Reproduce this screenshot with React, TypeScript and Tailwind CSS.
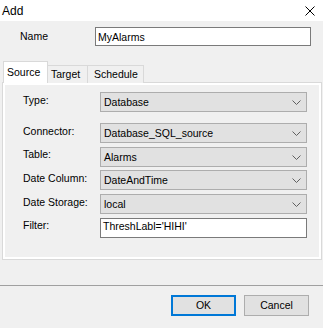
import React from 'react';

const font = { fontFamily: '"Liberation Sans", Arial, sans-serif' };

const Chevron: React.FC = () => (
  <svg width="9" height="5" viewBox="0 0 9 5" className="shrink-0">
    <path d="M0.5 0.5 L4.5 4.5 L8.5 0.5" fill="none" stroke="#606060" strokeWidth="1" />
  </svg>
);

interface RowProps {
  label: string;
  value: string;
  labelOffset: string;
  rowClass: string;
  kind?: 'combo' | 'text';
}

const Row: React.FC<RowProps> = ({ label, value, labelOffset, rowClass, kind = 'combo' }) => (
  <div className={`flex items-start h-[20px] ${rowClass}`}>
    <div className={`w-[77px] ml-[18px] leading-[13px] text-[#000] ${labelOffset}`}>{label}</div>
    {kind === 'combo' ? (
      <div className="w-[207px] h-[20px] bg-[#e1e1e1] border border-[#adadad] flex items-center justify-between pl-[3px] pr-[5px] pt-[1px]">
        <span className="leading-[13px]">{value}</span>
        <Chevron />
      </div>
    ) : (
      <div className="w-[207px] h-[20px] bg-white border border-[#7a7a7a] flex items-start pl-[2px] pt-[1px]">
        <span className="leading-[13px]">{value}</span>
      </div>
    )}
  </div>
);

export default function App() {
  return (
    <div className="w-[323px] h-[328px] bg-[#f0f0f0] flex flex-col text-[10.5px] text-black overflow-hidden" style={font}>
      {/* title bar */}
      <div className="h-[21px] bg-white flex items-center justify-between pl-[2px] pr-[8px] shrink-0">
        <span className="text-[12px] leading-[14px]">Add</span>
        <svg width="10" height="10" viewBox="0 0 10 10">
          <path d="M0.5 0.5 L9.5 9.5 M9.5 0.5 L0.5 9.5" stroke="#000" strokeWidth="1" />
        </svg>
      </div>

      {/* name */}
      <div className="mt-[6px] flex items-start h-[19px] shrink-0">
        <div className="w-[95px] pl-[20px] pt-[3px] leading-[13px]">Name</div>
        <div className="w-[216px] h-[19px] bg-white border border-[#7a7a7a] pl-[2px] pt-[3px] leading-[13px]">MyAlarms</div>
      </div>

      {/* tabs */}
      <div className="mt-[15px] ml-[3px] flex items-end h-[22px] -mb-[1px] relative z-10 shrink-0">
        <div className="h-[22px] w-[45px] bg-white border border-b-0 border-[#d9d9d9] pl-[3px] pt-[4px] leading-[13px]">Source</div>
        <div className="h-[18px] w-[40px] bg-[#f0f0f0] border border-l-0 border-b-0 border-[#d9d9d9] pl-[3px] pt-[2px] leading-[13px]">Target</div>
        <div className="h-[18px] w-[56px] bg-[#f0f0f0] border border-l-0 border-b-0 border-[#d9d9d9] pl-[6px] pt-[2px] leading-[13px]">Schedule</div>
      </div>

      {/* tab panel */}
      <div className="ml-[2px] w-[320px] h-[178px] border border-[#d9d9d9] bg-white p-[2px] shrink-0">
        <div className="h-full bg-[#f0f0f0] pt-[7px] flex flex-col">
          <Row label="Type:" value="Database" labelOffset="mt-[2px]" rowClass="" />
          <Row label="Connector:" value="Database_SQL_source" labelOffset="mt-[2px]" rowClass="mt-[11px]" />
          <Row label="Table:" value="Alarms" labelOffset="mt-[1px]" rowClass="mt-[4px]" />
          <Row label="Date Column:" value="DateAndTime" labelOffset="mt-[2px]" rowClass="mt-[3px]" />
          <Row label="Date Storage:" value="local" labelOffset="mt-[2px]" rowClass="mt-[4px]" />
          <Row label="Filter:" value="ThreshLabl='HIHI'" labelOffset="mt-[1px]" rowClass="mt-[4px]" kind="text" />
        </div>
      </div>

      {/* separator */}
      <div className="mt-[25px] h-px bg-[#a0a0a0] shrink-0" />

      {/* buttons */}
      <div className="mt-[9px] flex justify-end gap-[8px] pr-[14px] shrink-0">
        <button className="w-[65px] h-[21px] bg-[#e1e1e1] border-2 border-[#0078d7] leading-[13px]">OK</button>
        <button className="w-[65px] h-[21px] bg-[#e1e1e1] border border-[#adadad] leading-[13px]">Cancel</button>
      </div>
    </div>
  );
}
